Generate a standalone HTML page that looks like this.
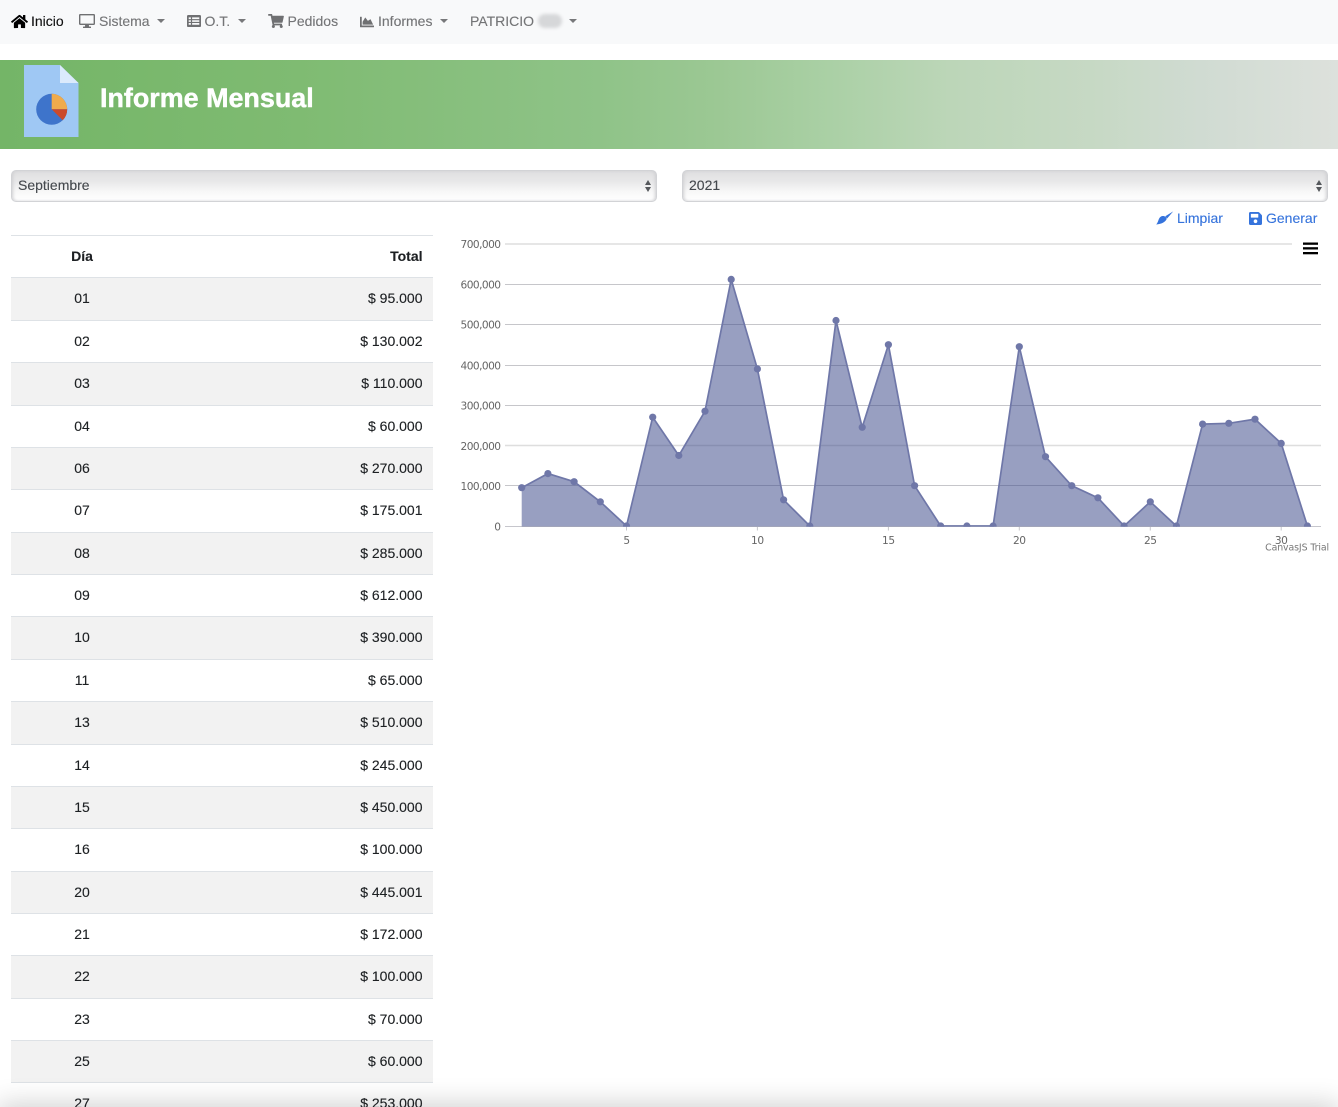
<!DOCTYPE html>
<html lang="es"><head><meta charset="utf-8"><title>Informe Mensual</title>
<style>
*{box-sizing:border-box}
html,body{margin:0;padding:0;width:1338px;height:1107px;overflow:hidden;background:#fff}
#w{position:relative;width:1338px;height:1107px;overflow:hidden;background:#fff;font-family:"Liberation Sans",sans-serif;font-size:14px;color:#1d2023;-webkit-text-stroke:.12px currentColor}
.a{position:absolute;white-space:nowrap}
nav{position:absolute;left:0;top:0;width:1338px;height:44px;background:#f8f9fa}
nav .t{position:absolute;top:13px;line-height:16px;color:#737476}
nav svg{position:absolute;fill:#6f7072}
.c{position:absolute;top:19px;width:0;height:0;border-left:4px solid transparent;border-right:4px solid transparent;border-top:4px solid #77787a}
.banner{position:absolute;left:0;top:60px;width:1338px;height:89px;background:linear-gradient(90deg,#74b567 0,#7fbb72 22.4%,#8fc388 44.8%,#9cc894 53.8%,#aad0a5 62%,#bcd6b8 71%,#c7d9c5 82.2%,#d0dbd2 89.7%,#dde1dc 100%)}
.banner h1{position:absolute;left:100px;top:22px;margin:0;font-size:26.900px;line-height:32px;font-weight:700;color:#fff;-webkit-text-stroke:.45px #fff}
.sel{position:absolute;top:170px;height:32px;width:646px;border:1px solid #d2d3d6;border-radius:5px;background:linear-gradient(#dfdfe0 0,#e8e8e9 35%,#f8f8f8 70%,#fff 100%);box-shadow:inset 2px 0 3px -1px #cfcfd2,inset -2px 0 3px -1px #cfcfd2;line-height:28px;padding-left:6px;color:#44484d}
.sel i{position:absolute;right:5px;width:0;height:0;border-left:3.500px solid transparent;border-right:3.500px solid transparent}
.sel i.u{top:9px;border-bottom:5px solid #55585c}
.sel i.d{top:16px;border-top:5px solid #55585c}
.lnk{position:absolute;top:210px;line-height:16px;color:#3573dc}
.tb{position:absolute;left:11px;top:235px;width:422px}
.r{height:42px;border-top:1px solid #dee2e6;position:relative;line-height:41px}
.r:nth-child(2),.r:nth-child(4),.r:nth-child(7),.r:nth-child(10),.r:nth-child(12),.r:nth-child(15),.r:nth-child(18){height:43px}
.r:nth-child(even){background:#f2f2f2}
.r b,.r span{position:absolute}
.r .d{left:0;width:142px;text-align:center}
.r .v{right:10.500px}
.shade{position:absolute;left:0;top:1107px;width:1338px;height:30px;box-shadow:0 0 28px 2px rgba(0,0,0,.2)}
svg text{-webkit-text-stroke:0}
</style></head><body>
<div id="w">

<nav>
<svg style="left:11px;top:13.500px" width="17" height="15" viewBox="0 0 576 512"><path style="fill:#000" d="M280.37 148.26L96 300.11V464a16 16 0 0 0 16 16l112.06-.29a16 16 0 0 0 15.92-16V368a16 16 0 0 1 16-16h64a16 16 0 0 1 16 16v95.64a16 16 0 0 0 16 16.05L464 480a16 16 0 0 0 16-16V300L295.67 148.26a12.19 12.19 0 0 0-15.3 0zM571.6 251.47L488 182.56V44.05a12 12 0 0 0-12-12h-56a12 12 0 0 0-12 12v72.61L318.47 43a48 48 0 0 0-61 0L4.34 251.47a12 12 0 0 0-1.6 16.9l25.5 31A12 12 0 0 0 45.15 301l235.22-193.74a12.19 12.19 0 0 1 15.3 0L530.9 301a12 12 0 0 0 16.9-1.6l25.5-31a12 12 0 0 0-1.7-16.93z"/></svg>
<span class="t" style="left:31px;color:#111">Inicio</span>
<svg style="left:79px;top:14px" width="16" height="14" viewBox="0 0 16 14"><path fill-rule="evenodd" d="M1.2 0h13.6A1.2 1.2 0 0 1 16 1.2v8.6a1.2 1.2 0 0 1-1.2 1.2H9.8l.4 1.6H12V14H4v-1.400h1.800l.4-1.600H1.200A1.200 1.200 0 0 1 0 9.800V1.200A1.200 1.200 0 0 1 1.200 0zM1.400 1.400v8.200h13.200V1.400z"/></svg>
<span class="t" style="left:99px">Sistema</span><i class="c" style="left:157px"></i>
<svg style="left:186.500px;top:15px" width="14" height="12" viewBox="0 0 14 12"><path fill-rule="evenodd" d="M1.300 0h11.400A1.300 1.300 0 0 1 14 1.300v9.400a1.300 1.300 0 0 1-1.300 1.300H1.300A1.300 1.300 0 0 1 0 10.700V1.300A1.300 1.300 0 0 1 1.300 0zM1.700 2.400v1.700h2.200V2.400zm3.400 0v1.700h7.200V2.400zM1.700 5.200v1.700h2.200V5.200zm3.400 0v1.700h7.200V5.200zM1.700 8v1.700h2.200V8zm3.400 0v1.700h7.200V8z"/></svg>
<span class="t" style="left:204.500px">O.T.</span><i class="c" style="left:238px"></i>
<svg style="left:268px;top:14px" width="16" height="14" viewBox="0 0 576 512"><path d="M528.12 301.319l47.273-208C578.806 78.301 567.391 64 551.99 64H159.208l-9.166-44.81C147.758 8.021 137.93 0 126.529 0H24C10.745 0 0 10.745 0 24v16c0 13.255 10.745 24 24 24h69.883l70.248 343.435C147.325 417.1 136 435.222 136 456c0 30.928 25.072 56 56 56s56-25.072 56-56c0-15.674-6.447-29.835-16.824-40h209.647C430.447 426.165 424 440.326 424 456c0 30.928 25.072 56 56 56s56-25.072 56-56c0-22.172-12.888-41.332-31.579-50.405l5.517-24.276c3.413-15.018-8.002-29.319-23.403-29.319H218.117l-6.545-32h293.145c11.206 0 20.92-7.754 23.403-18.681z"/></svg>
<span class="t" style="left:287.500px">Pedidos</span>
<svg style="left:360px;top:15px" width="14" height="14" viewBox="0 0 512 512"><path d="M500 384c6.600 0 12 5.400 12 12v40c0 6.600-5.400 12-12 12H12c-6.600 0-12-5.400-12-12V76c0-6.600 5.400-12 12-12h40c6.600 0 12 5.400 12 12v308h436zM372.700 159.500L288 216l-85.300-113.700c-5.100-6.800-15.500-6.300-19.900 1L96 248v104h384l-89.900-187.800c-3.200-6.500-11.400-8.700-17.400-4.700z"/></svg>
<span class="t" style="left:378px">Informes</span><i class="c" style="left:440px"></i>
<span class="t" style="left:470px">PATRICIO</span>
<div class="a" style="left:538px;top:14px;width:24px;height:14px;border-radius:7px;background:#d6d7d9;filter:blur(1.500px)"></div>
<i class="c" style="left:569px"></i>
</nav>

<div class="banner">
<svg style="position:absolute;left:24px;top:5px" width="55" height="72" viewBox="0 0 55 72">
<path d="M0 0H36L54.500 18V72H0Z" fill="#9fc8f4"/>
<path d="M36 0L54.500 18H36Z" fill="#dbeafc"/>
<circle cx="27.700" cy="44.300" r="15.500" fill="#3e74cb"/>
<path d="M27.700 44.300V28.800A15.500 15.500 0 0 1 43.200 44.300Z" fill="#efab4c"/>
<path d="M27.700 44.300H43.200A15.500 15.500 0 0 1 38.700 55.300Z" fill="#cb4a2c"/>
</svg>
<h1>Informe Mensual</h1>
</div>

<div class="sel" style="left:11px">Septiembre<i class="u"></i><i class="d"></i></div>
<div class="sel" style="left:682px">2021<i class="u"></i><i class="d"></i></div>

<svg class="a" style="left:1156px;top:211px" width="18" height="15" viewBox="0 0 18 15"><path fill="#3573dc" d="M17.200.4L9.300 5.300l1.800 2.200zM6.500 5c2-.3 4 1 4.200 3-1.700 3.500-5.500 5-10.500 5.500C1.700 12 2 10 2.700 8.500 3.400 6.700 4.700 5.200 6.500 5z"/></svg>
<span class="lnk" style="left:1177px">Limpiar</span>
<svg class="a" style="left:1249px;top:211px" width="13" height="15" viewBox="0 0 448 512"><path fill="#3573dc" d="M433.941 129.941l-83.882-83.882A48 48 0 0 0 316.118 32H48C21.490 32 0 53.490 0 80v352c0 26.510 21.490 48 48 48h352c26.510 0 48-21.490 48-48V163.882a48 48 0 0 0-14.059-33.941zM224 416c-35.346 0-64-28.654-64-64 0-35.346 28.654-64 64-64s64 28.654 64 64c0 35.346-28.654 64-64 64zm96-304.520V212c0 6.627-5.373 12-12 12H76c-6.627 0-12-5.373-12-12V108c0-6.627 5.373-12 12-12h228.520c3.183 0 6.235 1.264 8.485 3.515l3.480 3.480A11.996 11.996 0 0 1 320 111.480z"/></svg>
<span class="lnk" style="left:1266px">Generar</span>

<div class="tb">
<div class="r"><b class="d">Día</b><b class="v">Total</b></div>
<div class="r"><span class="d">01</span><span class="v">$ 95.000</span></div>
<div class="r"><span class="d">02</span><span class="v">$ 130.002</span></div>
<div class="r"><span class="d">03</span><span class="v">$ 110.000</span></div>
<div class="r"><span class="d">04</span><span class="v">$ 60.000</span></div>
<div class="r"><span class="d">06</span><span class="v">$ 270.000</span></div>
<div class="r"><span class="d">07</span><span class="v">$ 175.001</span></div>
<div class="r"><span class="d">08</span><span class="v">$ 285.000</span></div>
<div class="r"><span class="d">09</span><span class="v">$ 612.000</span></div>
<div class="r"><span class="d">10</span><span class="v">$ 390.000</span></div>
<div class="r"><span class="d">11</span><span class="v">$ 65.000</span></div>
<div class="r"><span class="d">13</span><span class="v">$ 510.000</span></div>
<div class="r"><span class="d">14</span><span class="v">$ 245.000</span></div>
<div class="r"><span class="d">15</span><span class="v">$ 450.000</span></div>
<div class="r"><span class="d">16</span><span class="v">$ 100.000</span></div>
<div class="r"><span class="d">20</span><span class="v">$ 445.001</span></div>
<div class="r"><span class="d">21</span><span class="v">$ 172.000</span></div>
<div class="r"><span class="d">22</span><span class="v">$ 100.000</span></div>
<div class="r"><span class="d">23</span><span class="v">$ 70.000</span></div>
<div class="r"><span class="d">25</span><span class="v">$ 60.000</span></div>
<div class="r"><span class="d">27</span><span class="v">$ 253.000</span></div>
</div>

<svg class="a" style="left:0;top:0" width="1338" height="1107" viewBox="0 0 1338 1107">
<defs><clipPath id="pl"><rect x="500" y="230" width="838" height="296.800"/></clipPath></defs>
<g stroke="#dedede" stroke-width="1.500"><path d="M505 244H1292"/><path d="M505 445.500H1321"/></g>
<g stroke="#c6c6ca" stroke-width="1"><path d="M505 284.500H1321M505 324.500H1321M505 365.500H1321M505 405.500H1321M505 485.500H1321"/></g>
<path d="M505 526.500H1321" stroke="#c6c6cc" stroke-width="1"/>
<g stroke="#c6c6cc" stroke-width="1"><path d="M626.500 526.500v4M757.400 526.500v4M888.400 526.500v4M1019.300 526.500v4M1150.300 526.500v4M1281.200 526.500v4"/></g>
<path fill="rgba(58,70,137,.52)" d="M521.700 526.500V487.700L547.900 473.600 574.100 481.700 600.300 501.800 626.500 526 652.700 417.200 678.800 455.500 705 411.200 731.200 279.400 757.400 368.900 783.600 499.800 809.800 526 836 320.500 862.200 427.300 888.400 344.700 914.600 485.700 940.700 526 966.900 526 993.100 526 1019.300 346.700 1045.500 456.700 1071.700 485.700 1097.900 497.800 1124.100 526 1150.300 501.800 1176.400 526 1202.600 424.100 1228.800 423.300 1255 419.200 1281.200 443.400 1307.400 526V526.500Z"/>
<g clip-path="url(#pl)">
<polyline fill="none" stroke="#6f77a8" stroke-width="1.700" stroke-linejoin="miter" points="521.700,487.700 547.900,473.600 574.100,481.700 600.300,501.800 626.500,526 652.700,417.200 678.800,455.500 705,411.200 731.200,279.400 757.400,368.900 783.600,499.800 809.800,526 836,320.500 862.200,427.300 888.400,344.700 914.600,485.700 940.700,526 966.900,526 993.100,526 1019.300,346.700 1045.500,456.700 1071.700,485.700 1097.900,497.800 1124.100,526 1150.300,501.800 1176.400,526 1202.600,424.100 1228.800,423.300 1255,419.200 1281.200,443.400 1307.400,526"/>
<g fill="#6f77a8">
<circle cx="521.700" cy="487.700" r="3.600"/><circle cx="547.900" cy="473.600" r="3.600"/><circle cx="574.100" cy="481.700" r="3.600"/><circle cx="600.300" cy="501.800" r="3.600"/><circle cx="626.500" cy="526" r="3.600"/><circle cx="652.700" cy="417.200" r="3.600"/><circle cx="678.800" cy="455.500" r="3.600"/><circle cx="705" cy="411.200" r="3.600"/><circle cx="731.200" cy="279.400" r="3.600"/><circle cx="757.400" cy="368.900" r="3.600"/><circle cx="783.600" cy="499.800" r="3.600"/><circle cx="809.800" cy="526" r="3.600"/><circle cx="836" cy="320.500" r="3.600"/><circle cx="862.200" cy="427.300" r="3.600"/><circle cx="888.400" cy="344.700" r="3.600"/><circle cx="914.600" cy="485.700" r="3.600"/><circle cx="940.700" cy="526" r="3.600"/><circle cx="966.900" cy="526" r="3.600"/><circle cx="993.100" cy="526" r="3.600"/><circle cx="1019.300" cy="346.700" r="3.600"/><circle cx="1045.500" cy="456.700" r="3.600"/><circle cx="1071.700" cy="485.700" r="3.600"/><circle cx="1097.900" cy="497.800" r="3.600"/><circle cx="1124.100" cy="526" r="3.600"/><circle cx="1150.300" cy="501.800" r="3.600"/><circle cx="1176.400" cy="526" r="3.600"/><circle cx="1202.600" cy="424.100" r="3.600"/><circle cx="1228.800" cy="423.300" r="3.600"/><circle cx="1255" cy="419.200" r="3.600"/><circle cx="1281.200" cy="443.400" r="3.600"/><circle cx="1307.400" cy="526" r="3.600"/>
</g></g>
<g font-family="'DejaVu Sans',sans-serif" font-size="10.600" letter-spacing="-.55" fill="#666" text-anchor="end">
<text x="500.500" y="247.800">700,000</text><text x="500.500" y="288.300">600,000</text><text x="500.500" y="328.300">500,000</text><text x="500.500" y="369.300">400,000</text><text x="500.500" y="409.300">300,000</text><text x="500.500" y="449.800">200,000</text><text x="500.500" y="489.800">100,000</text><text x="500.500" y="530.300">0</text>
</g>
<g font-family="'DejaVu Sans',sans-serif" font-size="10.600" letter-spacing="-.4" fill="#666" text-anchor="middle">
<text x="626.500" y="544">5</text><text x="757.400" y="544">10</text><text x="888.400" y="544">15</text><text x="1019.300" y="544">20</text><text x="1150.300" y="544">25</text><text x="1281.200" y="544">30</text>
</g>
<text x="1329" y="550.500" font-family="'DejaVu Sans',sans-serif" font-size="9.400" letter-spacing="-.1" fill="#777" text-anchor="end">CanvasJS Trial</text>
<g fill="#000"><rect x="1303" y="242.500" width="15" height="2.300"/><rect x="1303" y="247.200" width="15" height="2.300"/><rect x="1303" y="252" width="15" height="2.300"/></g>
</svg>

<div class="shade"></div>
</div>
</body></html>
